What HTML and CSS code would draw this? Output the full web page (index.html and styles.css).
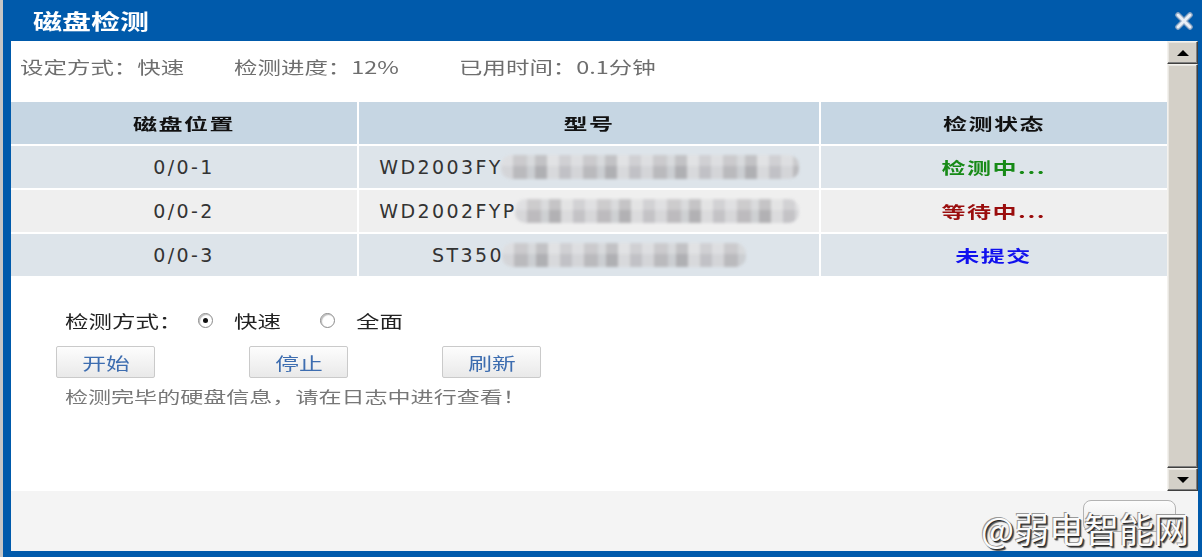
FILE: index.html
```html
<!DOCTYPE html>
<html lang="zh-CN">
<head>
  <meta charset="UTF-8">
  <title>磁盘检测</title>
  <link rel="stylesheet" href="styles.css">
</head>
<body>
  <div class="window">
    <div class="titlebar">
      <span class="title wide">磁盘检测</span>
      <svg class="close" width="22" height="20" viewBox="0 0 22 20">
        <path d="M5 4 L17 16 M17 4 L5 16" stroke="#8aa4c2" stroke-width="5.5" stroke-linecap="round"/>
        <path d="M5 4 L17 16 M17 4 L5 16" stroke="#e9eff6" stroke-width="3" stroke-linecap="round"/>
      </svg>
    </div>

    <div class="frame">
      <div class="viewport">
        <div class="content">
          <div class="summary">
            <span class="sum-mode"><span class="wide">设定方式：快速</span></span>
            <span class="sum-progress"><span class="wide">检测进度：12%</span></span>
            <span><span class="wide">已用时间：0.1分钟</span></span>
          </div>

          <div class="disks">
            <div class="cell head"><span class="wide-c">磁盘位置</span></div>
            <div class="cell head"><span class="wide-c">型号</span></div>
            <div class="cell head"><span class="wide-c">检测状态</span></div>

            <div class="cell odd num">0/0-1</div>
            <div class="cell odd num">WD2003FY<span class="masked" style="width: 298px"></span></div>
            <div class="cell odd status checking"><span class="wide-c">检测中...</span></div>

            <div class="cell even num">0/0-2</div>
            <div class="cell even num">WD2002FYP<span class="masked" style="width: 284px"></span></div>
            <div class="cell even status waiting"><span class="wide-c">等待中...</span></div>

            <div class="cell odd num">0/0-3</div>
            <div class="cell odd num">ST350<span class="masked" style="width: 244px"></span></div>
            <div class="cell odd status pending"><span class="wide-c">未提交</span></div>
          </div>

          <div class="mode">
            <span class="mode-label"><span class="wide">检测方式：</span></span>
            <span class="radio checked"></span><span class="radio-text"><span class="wide">快速</span></span>
            <span class="radio"></span><span class="radio-text"><span class="wide">全面</span></span>
          </div>

          <div class="actions">
            <button class="btn"><span class="wide-c">开始</span></button>
            <button class="btn"><span class="wide-c">停止</span></button>
            <button class="btn"><span class="wide-c">刷新</span></button>
          </div>

          <p class="note"><span class="wide">检测完毕的硬盘信息，请在日志中进行查看！</span></p>
        </div>

        <div class="scrollbar">
          <div class="sb-btn"><span class="arrow up"></span></div>
          <div class="sb-thumb"></div>
          <div class="sb-btn"><span class="arrow down"></span></div>
        </div>
      </div>

      <div class="footer">
        <button class="footer-btn"></button>
      </div>
    </div>

    <div class="watermark">@弱电智能网</div>
  </div>
</body>
</html>
```

FILE: styles.css
```css
body {
  margin: 0;
  background: #fff;
  font-family: "Noto Sans CJK SC", sans-serif;
}

/* the old dialog draws its Chinese text stretched sideways */
.wide {
  display: inline-block;
  transform: scaleX(1.38);
  transform-origin: left center;
  white-space: nowrap;
}

.wide-c {
  display: inline-block;
  transform: scaleX(1.5);
  transform-origin: center;
  white-space: nowrap;
}

.window {
  position: relative;
  width: 1202px;
  height: 557px;
  box-sizing: border-box;
  border-left: 3px solid #c6c6c6;
  background: #005aab;
  padding: 0 4px 6px 8px;
  display: flex;
  flex-direction: column;
  overflow: hidden;
}

.titlebar {
  height: 41px;
  flex: none;
  display: flex;
  align-items: center;
  justify-content: space-between;
  padding: 0 3px 0 22px;
}

.title {
  color: #fff;
  font-size: 21px;
  font-weight: bold;
  margin-top: -2px;
}

.close {
  display: block;
}

.frame {
  flex: 1;
  display: flex;
  flex-direction: column;
  background: #fff;
}

.viewport {
  height: 450px;
  display: flex;
}

.content {
  flex: 1;
}

.summary {
  display: flex;
  padding: 14px 0 23px 9px;
  line-height: 24px;
  font-size: 17px;
  color: #6e6e6e;
}

.sum-mode {
  width: 214px;
}

.sum-progress {
  width: 225px;
}

.disks {
  display: grid;
  grid-template-columns: 346px 460px 346px;
  grid-auto-rows: 42px;
  gap: 2px;
}

.cell {
  display: flex;
  align-items: center;
  justify-content: center;
  color: #2e2e2e;
}

.head {
  background: #c6d6e3;
  font-weight: bold;
  font-size: 16px;
  letter-spacing: 1px;
  color: #111;
}

.odd {
  background: #dde4ea;
}

.even {
  background: #efefef;
}

.num {
  font-family: "DejaVu Sans", sans-serif;
  font-size: 19px;
  letter-spacing: 2.4px;
  color: #333;
}

.masked {
  display: inline-block;
  height: 24px;
  margin-left: -2px;
  border-radius: 10px;
  background:
    linear-gradient(180deg, rgba(255,255,255,0.25) 0 45%, rgba(0,0,0,0) 45%),
    repeating-linear-gradient(90deg, #d3d3d6 0 12px, #b5b3b6 12px 26px, #c9cbce 26px 34px, #a8a7aa 34px 46px, #d8d8da 46px 58px, #bdbcc0 58px 70px);
  filter: blur(1.6px);
  opacity: 0.85;
}

.status {
  font-weight: bold;
  font-size: 16px;
  letter-spacing: 1px;
}

.checking {
  color: #178a17;
}

.waiting {
  color: #9a0d0d;
}

.pending {
  color: #1010ee;
}

.mode {
  display: flex;
  align-items: center;
  margin-top: 32px;
  padding-left: 54px;
  height: 24px;
  font-size: 17px;
  color: #222;
}

.mode-label {
  width: 133px;
}

.radio {
  width: 13px;
  height: 13px;
  border: 1px solid #8a8a8a;
  border-radius: 50%;
  box-shadow: inset 1px 1px 1px #bbb;
  background: #fff;
  position: relative;
  margin-right: 21px;
}

.radio.checked::after {
  content: "";
  position: absolute;
  left: 4px;
  top: 4px;
  width: 5px;
  height: 5px;
  border-radius: 50%;
  background: #111;
}

.radio-text {
  width: 86px;
}

.actions {
  display: flex;
  gap: 94px;
  margin-top: 14px;
  padding-left: 45px;
}

.btn {
  width: 99px;
  height: 32px;
  border: 1px solid #cacaca;
  border-radius: 2px;
  background: linear-gradient(#fdfdfd, #e9e9e9);
  color: #3d6db0;
  font-family: "Noto Sans CJK SC", sans-serif;
  font-size: 17px;
  padding: 0;
}

.btn .wide-c {
  transform: scaleX(1.4);
}

.note {
  margin: 6px 0 0;
  padding-left: 54px;
  line-height: 24px;
  font-size: 16px;
  color: #777;
}

.note .wide {
  transform: scaleX(1.44);
}

.scrollbar {
  width: 32px;
  display: flex;
  flex-direction: column;
  background: #d4d0c8;
}

.sb-btn,
.sb-thumb {
  box-sizing: border-box;
  background: #d4d0c8;
  border: 1px solid;
  border-color: #f4f2ee #404040 #404040 #f4f2ee;
  box-shadow: inset -1px -1px #808080, inset 1px 1px #e8e6e1;
}

.sb-btn {
  height: 23px;
  display: flex;
  align-items: center;
  justify-content: center;
}

.sb-thumb {
  flex: 1;
}

.arrow {
  width: 0;
  height: 0;
  border-left: 6px solid transparent;
  border-right: 6px solid transparent;
}

.arrow.up {
  border-bottom: 6px solid #000;
}

.arrow.down {
  border-top: 6px solid #000;
}

.footer {
  flex: 1;
  background: #f4f4f4;
  display: flex;
  justify-content: flex-end;
  align-items: flex-start;
  padding: 9px 22px 0 0;
}

.footer-btn {
  width: 93px;
  height: 32px;
  border: 1px solid #b3b3b3;
  border-radius: 8px;
  background: linear-gradient(#fcfcfc, #e8e8e8);
}

.watermark {
  position: absolute;
  left: 978px;
  top: 506px;
  font-size: 35px;
  line-height: 44px;
  color: #fbfbfb;
  text-shadow: 1px 1px 0 #2a2a2a, 2px 2px 1px #555, -1px -1px 0 #999;
}
```
